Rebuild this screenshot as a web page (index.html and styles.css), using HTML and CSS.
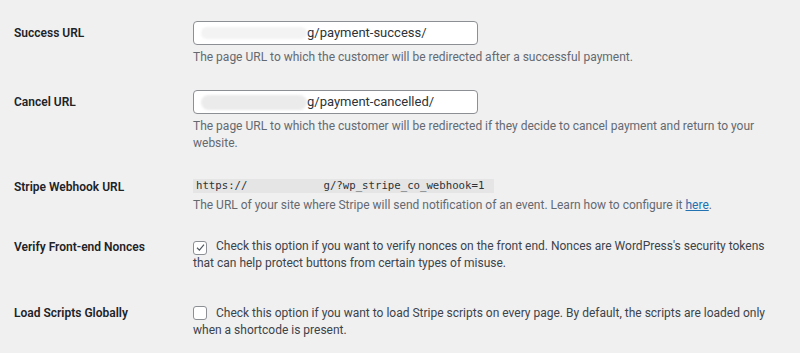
FILE: index.html
```html
<!DOCTYPE html>
<html lang="en">
<head>
    <meta charset="UTF-8">
    <meta name="viewport" content="width=device-width, initial-scale=1.0">
    <title>Stripe Settings</title>
    <link rel="stylesheet" href="styles.css">
</head>
<body>
    <div class="form-table">
        <div class="row row-success">
            <div class="label">Success URL</div>
            <div class="field">
                <div class="text-input"><span class="redact redact-specks"></span>g/payment-success/</div>
                <p class="description">The page URL to which the customer will be redirected after a successful payment.</p>
            </div>
        </div>

        <div class="row row-cancel">
            <div class="label">Cancel URL</div>
            <div class="field">
                <div class="text-input"><span class="redact redact-pill"></span>g/payment-cancelled/</div>
                <p class="description">The page URL to which the customer will be redirected if they decide to cancel payment and return to your<br>website.</p>
            </div>
        </div>

        <div class="row row-webhook">
            <div class="label">Stripe Webhook URL</div>
            <div class="field">
                <code class="code">https://<span class="redact-gap"></span>g/?wp_stripe_co_webhook=1</code>
                <p class="description">The URL of your site where Stripe will send notification of an event. Learn how to configure it <a href="#">here</a>.</p>
            </div>
        </div>

        <div class="row row-nonces">
            <div class="label">Verify Front-end Nonces</div>
            <div class="field">
                <label class="check">
                    <span class="box checked">
                        <svg viewBox="0 0 12 12" width="11" height="11"><path d="M2.2 6.3 L4.8 8.8 L9.8 2.8" fill="none" stroke="#50575e" stroke-width="1.3"/></svg>
                    </span>
                    Check this option if you want to verify nonces on the front end. Nonces are WordPress's security tokens<br>that can help protect buttons from certain types of misuse.
                </label>
            </div>
        </div>

        <div class="row row-scripts">
            <div class="label">Load Scripts Globally</div>
            <div class="field">
                <label class="check">
                    <span class="box"></span>
                    Check this option if you want to load Stripe scripts on every page. By default, the scripts are loaded only<br>when a shortcode is present.
                </label>
            </div>
        </div>
    </div>
</body>
</html>
```

FILE: styles.css
```css
* {
    margin: 0;
    padding: 0;
    box-sizing: border-box;
}

body {
    font-family: 'Roboto', 'Liberation Sans', sans-serif;
    font-size: 12px;
    background: #f0f0f1;
    color: #3c434a;
    padding: 0 0 0 14px;
    overflow: hidden;
}

.row {
    display: grid;
    grid-template-columns: 179px 1fr;
    white-space: nowrap;
}

.label {
    font-weight: 600;
    color: #1d2327;
    line-height: 16px;
}

.row-success { padding-top: 21px; height: 90px; }
.row-success .label { margin-top: 4px; }

.row-cancel { height: 85px; }
.row-cancel .label { margin-top: 4px; }

.row-webhook { padding-top: 3px; height: 57px; }
.row-webhook .label { margin-top: 1px; }

.row-nonces { padding-top: 6px; height: 73px; }
.row-nonces .label { margin-top: 1px; }

.row-scripts { padding-top: 0; }

.text-input {
    width: 285px;
    height: 24px;
    border: 1px solid #8c8f94;
    border-radius: 4px;
    background: #fff;
    font-size: 13px;
    color: #2c3338;
    display: flex;
    align-items: center;
    padding-left: 7px;
    line-height: 20px;
}

.redact {
    display: inline-block;
    height: 12px;
    background: #ececec;
    border-radius: 6px;
    filter: blur(1px);
}

.redact-specks {
    width: 106px;
    background: #f3f3f3;
}

.redact-pill {
    width: 106px;
    height: 15px;
    border-radius: 8px;
    background: #ebebeb;
}

.description {
    color: #646970;
    line-height: 17px;
    margin-top: 4px;
}

.description a {
    color: #2271b1;
    text-decoration: underline;
}

.code {
    display: inline-block;
    font-family: 'DejaVu Sans Mono', monospace;
    font-size: 10.7px;
    background: #e5e5e5;
    color: #2c3338;
    padding: 0 3px;
    line-height: 14px;
    width: 301px;
}

.redact-gap {
    display: inline-block;
    width: 76px;
}

.check {
    display: block;
    line-height: 17px;
    color: #3c434a;
}

.box {
    display: inline-flex;
    align-items: center;
    justify-content: center;
    width: 14px;
    height: 14px;
    border: 1px solid #8c8f94;
    border-radius: 3px;
    background: #fff;
    vertical-align: -3px;
    margin-right: 6px;
}
```
